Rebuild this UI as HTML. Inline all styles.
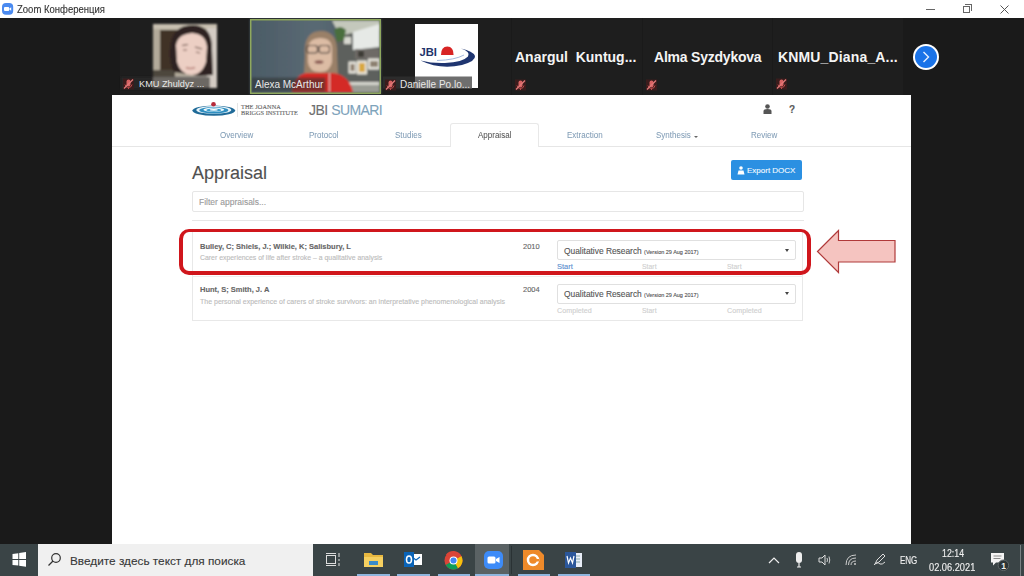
<!DOCTYPE html>
<html><head><meta charset="utf-8">
<style>
*{margin:0;padding:0;box-sizing:border-box}
html,body{width:1024px;height:576px;overflow:hidden;background:#1a1a1a;font-family:"Liberation Sans",sans-serif;position:relative}
.a{position:absolute}
.t{position:absolute;white-space:nowrap;line-height:1;-webkit-text-stroke:0.12px currentColor}
.nm{position:absolute;color:#f4f4f4;font-weight:bold;font-size:14px;white-space:nowrap;line-height:1}
.sn{position:absolute;color:#e8e8e8;font-size:10px;white-space:nowrap;line-height:1}
.nav{position:absolute;color:#819db6;font-size:8.8px;white-space:nowrap;line-height:1;top:131px;transform:scaleX(0.91);transform-origin:0 0;-webkit-text-stroke:0.05px currentColor}
.mic{position:absolute;width:11px;height:12px}
.ul{position:absolute;top:574px;height:2px;background:#8fb6de}
</style></head><body>
<!-- title bar -->
<div class="a" style="left:0;top:0;width:1024px;height:18px;background:#fff">
  <svg class="a" style="left:0;top:0" width="16" height="18" viewBox="0 0 16 18"><rect x="2" y="3.1" width="11.2" height="11.6" rx="4" fill="#4a8af0"/><rect x="4" y="7" width="5.2" height="4" rx="1" fill="#fff"/><path d="M9.4 8.5 L11.2 7.2 L11.2 10.8 L9.4 9.6 Z" fill="#fff"/></svg>
  <div class="t" style="left:16.5px;top:3.7px;font-size:11px;color:#333;transform:scaleX(0.865);transform-origin:0 0">Zoom Конференция</div>
  <div class="a" style="left:926px;top:9px;width:9px;height:1px;background:#666"></div>
  <div class="a" style="left:963px;top:6px;width:7px;height:7px;border:1px solid #666"></div>
  <div class="a" style="left:965px;top:4px;width:7px;height:7px;border-top:1px solid #666;border-right:1px solid #666"></div>
  <svg class="a" style="left:1000px;top:5px" width="9" height="9"><path d="M0.5 0.5L8.5 8.5M8.5 0.5L0.5 8.5" stroke="#555" stroke-width="1"/></svg>
</div>
<svg class="a" style="left:0;top:18px" width="1024" height="77" viewBox="0 18 1024 77">
<defs>
<filter id="soft" x="-5%" y="-5%" width="110%" height="110%"><feGaussianBlur stdDeviation="0.8"/></filter>
<linearGradient id="wallA" x1="0" y1="0" x2="1" y2="0"><stop offset="0" stop-color="#4b5b66"/><stop offset="0.5" stop-color="#5a6a74"/><stop offset="1" stop-color="#46545d"/></linearGradient>
<radialGradient id="faceK" cx="0.5" cy="0.45" r="0.6"><stop offset="0" stop-color="#f0c9b8"/><stop offset="1" stop-color="#c99a88"/></radialGradient>
<radialGradient id="faceA" cx="0.5" cy="0.45" r="0.6"><stop offset="0" stop-color="#e8c0a8"/><stop offset="1" stop-color="#b88a72"/></radialGradient>
</defs>
<rect x="0" y="18" width="1024" height="77" fill="#1a1a1a"/>
<rect x="120" y="18" width="130" height="77" fill="#1e1e1e"/>
<rect x="381" y="18" width="130" height="77" fill="#1e1e1e"/>
<rect x="512" y="18" width="130" height="77" fill="#1e1e1e"/>
<rect x="643" y="18" width="129" height="77" fill="#1e1e1e"/>
<rect x="773" y="18" width="130" height="77" fill="#1e1e1e"/>
<!-- KMU photo -->
<g filter="url(#soft)">
<rect x="153" y="24" width="64" height="64" fill="#b2aa9a"/>
<rect x="153" y="24" width="64" height="5" fill="#c8c0b0"/>
<rect x="160" y="30" width="18" height="42" fill="#3f3026"/>
<rect x="153" y="70" width="22" height="18" fill="#4e463e"/>
<rect x="207" y="28" width="10" height="60" fill="#d4ccc4"/>
<path d="M170 50 Q171 25 193 25 Q213 26 212 50 L213 75 L200 76 L174 72 Q169 62 170 50 Z" fill="#2e2420"/>
<path d="M176 45 Q178 34 192 33 Q206 34 207 47 L206 62 Q202 75 191 75 Q180 74 177 62 Z" fill="#eccfc4"/>
<path d="M182 45.5 L188 44.5 M195 47 L202 49" stroke="#5e443c" stroke-width="1.2"/>
<path d="M183 50 L187 50 M196 52 L200 53" stroke="#7a5a52" stroke-width="1.2"/>
<path d="M186 67.5 Q190 69.5 195 67.5" stroke="#b88078" stroke-width="1.6" fill="none"/>
<path d="M175 76 L207 76 L207 88 L172 88 Z" fill="#9a948e"/>
<rect x="121" y="77" width="32" height="12" fill="#262626"/>
<rect x="153" y="77" width="57" height="11" fill="#6c6864"/>
</g>
<!-- Alexa -->
<g filter="url(#soft)">
<rect x="250" y="19" width="131" height="75" fill="url(#wallA)"/>
<path d="M332 20.5 L379.5 20.5 L379.5 92.5 L334 92.5 L334 40 L340 34 Z" fill="#5d615d"/>
<path d="M332 20.5 L379.5 20.5 L379.5 30 L352 33 L340 36 Z" fill="#c4c8bc"/>
<path d="M353 32 L379.5 24 L379.5 47 L353 50 Z" fill="#e6e9e6"/>
<rect x="355" y="49" width="24.5" height="10" fill="#6e6a66"/>
<rect x="358" y="51" width="6" height="6" fill="#3e3a36"/>
<rect x="344" y="37" width="7" height="7" fill="#d8d8d0"/>
<rect x="348.5" y="61.5" width="8" height="12" fill="#e6e4dc"/>
<rect x="350.5" y="64" width="4" height="7" fill="#8a7a6a"/>
<rect x="357" y="60.5" width="10" height="14" fill="#e8e4d8"/>
<rect x="359" y="63" width="6" height="9" fill="#d8a840"/>
<rect x="368" y="58.5" width="11.5" height="11" fill="#e8e6de"/>
<rect x="370" y="61" width="8" height="6" fill="#8c8070"/>
<rect x="344" y="82" width="35.5" height="3" fill="#d4d4cc"/>
<rect x="334" y="85" width="45.5" height="7.5" fill="#9a9c94"/>
<path d="M334 30 Q340 24 346 30 L344 40 L337 42 Z" fill="#4a6e3e"/>
<path d="M305 56 Q303 31 321 31 Q338 31 337 54 L338 75 L304 75 Z" fill="#9a8068"/>
<path d="M308 48 Q309 38 320 38 Q332 38 332 49 L332 62 Q330 72 320 72 Q309 72 308 62 Z" fill="#dcbca4"/>
<rect x="307" y="45.5" width="10.5" height="7.5" rx="2.5" fill="none" stroke="#3a3230" stroke-width="1.1"/>
<rect x="319" y="45.5" width="10.5" height="7.5" rx="2.5" fill="none" stroke="#3a3230" stroke-width="1.1"/>
<ellipse cx="319" cy="62" rx="4.5" ry="1.8" fill="#8a5a52"/>
<path d="M292 92.5 Q293 76 306 73 L334 73 Q350 76 353 92.5 Z" fill="#d42c26"/>
<path d="M329.5 73 L329.5 92" stroke="#e8dcd8" stroke-width="0.8"/>
<rect x="251.5" y="77.5" width="74" height="14" fill="#2e3030" opacity="0.55"/>
</g>
<rect x="250.75" y="19.75" width="129.5" height="73.5" fill="none" stroke="#8fa85e" stroke-width="1.5"/>
<!-- Danielle -->
<g>
<rect x="415" y="24" width="63" height="64" fill="#ffffff"/>
<text x="419.5" y="55.5" font-family="Liberation Sans" font-weight="bold" font-size="11" fill="#22356a" textLength="17.5" lengthAdjust="spacingAndGlyphs">JBI</text>
<path d="M441 55 Q441 46.5 447.3 46.5 Q453.6 46.5 453.6 55 Z" fill="#d82424"/>
<path d="M420.5 60.5 Q440 70 462 65 Q476 61 475 56 Q473 51 461 48.5 Q471 52 468 56.5 Q463 62 445 63 Q432 63.5 420.5 60.5 Z" fill="#1f3570"/>
<path d="M437 60.5 Q455 60 464 55" fill="none" stroke="#9ab0d8" stroke-width="0.9"/>
<rect x="383" y="76.5" width="32" height="12" fill="#2c2c2c"/>
<rect x="415" y="76.5" width="57" height="12" fill="#6e6e6e"/>
</g>
<!-- next arrow -->
<circle cx="926" cy="57" r="13" fill="#ffffff"/>
<circle cx="926" cy="57" r="11" fill="#1a73e8"/>
<path d="M923.5 52 L928.5 57 L923.5 62" fill="none" stroke="#e8f0ff" stroke-width="1.4"/>
</svg>
<div class="sn" style="left:139px;top:80px;font-size:9.2px">KMU Zhuldyz ...</div>
<div class="sn" style="left:255px;top:80px">Alexa McArthur</div>
<div class="sn" style="left:400px;top:80px">Danielle Po.lo...</div>
<div class="nm" style="left:515px;top:50px">Anargul&nbsp; Kuntug...</div>
<div class="nm" style="left:654px;top:50px;letter-spacing:-0.22px">Alma Syzdykova</div>
<div class="nm" style="left:778px;top:50px;letter-spacing:0.15px">KNMU_Diana_A...</div>
<svg class="mic" style="left:123px;top:78px" viewBox="0 0 11 12"><rect x="0" y="0.5" width="11" height="11" fill="#3a1c1c"/><rect x="3.5" y="1.5" width="4" height="7" rx="2" fill="#d86262"/><path d="M2 6.5 Q2.5 9.5 5.5 9.5 Q8.5 9.5 9 6.5 M5.5 9.5 V11" fill="none" stroke="#c85050" stroke-width="0.9"/><path d="M1 10.5 L10 1.5" stroke="#e07a7a" stroke-width="1.2"/></svg>
<svg class="mic" style="left:385px;top:79px" viewBox="0 0 11 12"><rect x="0" y="0.5" width="11" height="11" fill="#3a1c1c"/><rect x="3.5" y="1.5" width="4" height="7" rx="2" fill="#d86262"/><path d="M2 6.5 Q2.5 9.5 5.5 9.5 Q8.5 9.5 9 6.5 M5.5 9.5 V11" fill="none" stroke="#c85050" stroke-width="0.9"/><path d="M1 10.5 L10 1.5" stroke="#e07a7a" stroke-width="1.2"/></svg>
<svg class="mic" style="left:515px;top:79px" viewBox="0 0 11 12"><rect x="0" y="0.5" width="11" height="11" fill="#3a1c1c"/><rect x="3.5" y="1.5" width="4" height="7" rx="2" fill="#d86262"/><path d="M2 6.5 Q2.5 9.5 5.5 9.5 Q8.5 9.5 9 6.5 M5.5 9.5 V11" fill="none" stroke="#c85050" stroke-width="0.9"/><path d="M1 10.5 L10 1.5" stroke="#e07a7a" stroke-width="1.2"/></svg>
<svg class="mic" style="left:646px;top:79px" viewBox="0 0 11 12"><rect x="0" y="0.5" width="11" height="11" fill="#3a1c1c"/><rect x="3.5" y="1.5" width="4" height="7" rx="2" fill="#d86262"/><path d="M2 6.5 Q2.5 9.5 5.5 9.5 Q8.5 9.5 9 6.5 M5.5 9.5 V11" fill="none" stroke="#c85050" stroke-width="0.9"/><path d="M1 10.5 L10 1.5" stroke="#e07a7a" stroke-width="1.2"/></svg>
<svg class="mic" style="left:776px;top:78px" viewBox="0 0 11 12"><rect x="0" y="0.5" width="11" height="11" fill="#3a1c1c"/><rect x="3.5" y="1.5" width="4" height="7" rx="2" fill="#d86262"/><path d="M2 6.5 Q2.5 9.5 5.5 9.5 Q8.5 9.5 9 6.5 M5.5 9.5 V11" fill="none" stroke="#c85050" stroke-width="0.9"/><path d="M1 10.5 L10 1.5" stroke="#e07a7a" stroke-width="1.2"/></svg>
<div class="a" style="left:112px;top:95px;width:799px;height:449px;background:#fff"></div>
<!-- logo -->
<svg class="a" style="left:190px;top:100px" width="50" height="20" viewBox="0 0 50 20">
  <ellipse cx="23.8" cy="10.6" rx="21.4" ry="5.2" fill="#1f6a98"/>
  <ellipse cx="23.8" cy="9.9" rx="17.5" ry="3.9" fill="#e8f4fa"/>
  <ellipse cx="23.8" cy="10.3" rx="14.5" ry="3.2" fill="#2f8ec0"/>
  <ellipse cx="23.8" cy="9.8" rx="10.5" ry="2.2" fill="#eef8fc"/>
  <ellipse cx="23.8" cy="10.1" rx="7.5" ry="1.7" fill="#3a9ccc"/>
  <ellipse cx="23.8" cy="9.8" rx="4" ry="0.9" fill="#fff"/>
  <circle cx="23.5" cy="4.3" r="2.3" fill="#b52a3a"/>
</svg>
<div class="a" style="left:237px;top:103px;width:1px;height:14px;background:#e6e6e6"></div>
<div class="t" style="left:241px;top:104px;font-family:'Liberation Serif',serif;font-size:6.3px;color:#666;letter-spacing:0.1px">THE JOANNA</div>
<div class="t" style="left:241px;top:110px;font-family:'Liberation Serif',serif;font-size:6.3px;color:#666;letter-spacing:0px">BRIGGS INSTITUTE</div>
<div class="t" style="left:309px;top:103px;font-size:14px;color:#6f6f6f;letter-spacing:-0.6px;word-spacing:0.5px">JBI <span style="color:#7ea3bb">SUMARI</span></div>
<!-- user/help icons -->
<svg class="a" style="left:763px;top:104px" width="9" height="10" viewBox="0 0 9 10"><circle cx="4.5" cy="2.5" r="2.3" fill="#555"/><path d="M0.5 10 L0.5 7 Q0.5 5 4.5 5 Q8.5 5 8.5 7 L8.5 10 Z" fill="#555"/></svg>
<div class="t" style="left:789px;top:105px;font-size:10px;font-weight:bold;color:#5a5a5a">?</div>
<!-- nav -->
<div class="a" style="left:112px;top:146px;width:799px;height:1px;background:#e6e6e6"></div>
<div class="a" style="left:450px;top:123px;width:89px;height:24px;background:#fff;border:1px solid #e8e8e8;border-bottom:none;border-radius:3px 3px 0 0"></div>
<div class="nav" style="left:220px">Overview</div>
<div class="nav" style="left:309px">Protocol</div>
<div class="nav" style="left:395px">Studies</div>
<div class="nav" style="left:478px;color:#555">Appraisal</div>
<div class="nav" style="left:567px">Extraction</div>
<div class="nav" style="left:656px">Synthesis</div><div class="a" style="left:693.5px;top:135.5px;width:0;height:0;border-left:2.5px solid transparent;border-right:2.5px solid transparent;border-top:2.8px solid #666"></div>
<div class="nav" style="left:751px">Review</div>
<!-- heading -->
<div class="t" style="left:192px;top:164px;font-size:18px;color:#505050">Appraisal</div>
<div class="a" style="left:731px;top:160px;width:71px;height:20px;background:#2b90e2;border-radius:2px"></div>
<svg class="a" style="left:737px;top:166px" width="8" height="9" viewBox="0 0 8 9"><circle cx="4" cy="2" r="1.8" fill="#fff"/><path d="M0.5 8.5 L1.5 4.5 L6.5 4.5 L7.5 8.5Z" fill="#fff"/></svg>
<div class="t" style="left:747px;top:167px;font-size:8px;color:#f4faff">Export DOCX</div>
<!-- filter -->
<div class="a" style="left:192px;top:191px;width:612px;height:21px;border:1px solid #e6e6e6;border-radius:2px"></div>
<div class="t" style="left:199px;top:198px;font-size:8.5px;color:#9a9a9a">Filter appraisals...</div>
<div class="a" style="left:192px;top:220px;width:612px;height:1px;background:#e6e6e6"></div>
<!-- list -->
<div class="a" style="left:192px;top:232px;width:611px;height:89px;border:1px solid #e8e8e8;border-top:none"></div>
<div class="a" style="left:192px;top:276px;width:611px;height:1px;background:#eee"></div>
<div class="t" style="left:200px;top:243px;font-size:7.5px;font-weight:bold;color:#666">Bulley, C; Shiels, J.; Wilkie, K; Salisbury, L</div>
<div class="t" style="left:200px;top:255px;font-size:6.9px;color:#bcbcbc">Carer experiences of life after stroke – a qualitative analysis</div>
<div class="t" style="left:523px;top:243px;font-size:7.5px;color:#666">2010</div>
<div class="a" style="left:557px;top:240px;width:239px;height:20px;border:1px solid #e0e0e0;border-radius:2px"></div>
<div class="t" style="left:564px;top:247px;font-size:8.4px;color:#555">Qualitative Research <span style="font-size:5.5px">(Version 29 Aug 2017)</span></div>
<div class="a" style="left:785px;top:249px;width:0;height:0;border-left:2.5px solid transparent;border-right:2.5px solid transparent;border-top:3px solid #444"></div>
<div class="t" style="left:557px;top:263px;font-size:7.5px;color:#5b8fcf">Start</div>
<div class="t" style="left:642px;top:264px;font-size:6.9px;color:#cfcfcf">Start</div>
<div class="t" style="left:727px;top:264px;font-size:6.9px;color:#cfcfcf">Start</div>

<div class="t" style="left:200px;top:286px;font-size:7.5px;font-weight:bold;color:#666">Hunt, S; Smith, J. A</div>
<div class="t" style="left:200px;top:298px;font-size:7px;color:#bcbcbc">The personal experience of carers of stroke survivors: an interpretative phenomenological analysis</div>
<div class="t" style="left:523px;top:286px;font-size:7.5px;color:#666">2004</div>
<div class="a" style="left:557px;top:284px;width:239px;height:20px;border:1px solid #e0e0e0;border-radius:2px"></div>
<div class="t" style="left:564px;top:290px;font-size:8.4px;color:#555">Qualitative Research <span style="font-size:5.5px">(Version 29 Aug 2017)</span></div>
<div class="a" style="left:785px;top:292px;width:0;height:0;border-left:2.5px solid transparent;border-right:2.5px solid transparent;border-top:3px solid #444"></div>
<div class="t" style="left:557px;top:307px;font-size:7.2px;color:#cfcfcf">Completed</div>
<div class="t" style="left:642px;top:308px;font-size:6.9px;color:#cfcfcf">Start</div>
<div class="t" style="left:727px;top:307px;font-size:7.2px;color:#cfcfcf">Completed</div>

<!-- red highlight -->
<div class="a" style="left:179px;top:228.8px;width:632px;height:46.5px;border:solid #d0161c;border-width:3.6px 4px 4.2px 4px;border-radius:10px"></div>
<svg class="a" style="left:815px;top:228px" width="82" height="47" viewBox="815 228 82 47">
  <path d="M817.5 251.5 L838.5 230.5 L838.5 240.5 L895 240.5 L895 262 L838.5 262 L838.5 272.5 Z" fill="#f5c4c0" stroke="#b03a3a" stroke-width="1.2"/>
</svg>
<div class="a" style="left:0;top:544px;width:1024px;height:32px;background:#3a4446"></div>
<svg class="a" style="left:12px;top:552px" width="15" height="15" viewBox="0 0 15 15"><path d="M0.5 2 L6.3 1.2 L6.3 7 L0.5 7 Z M7.2 1 L14 0 L14 7 L7.2 7 Z M0.5 7.9 L6.3 7.9 L6.3 13.6 L0.5 12.9 Z M7.2 7.9 L14 7.9 L14 14.7 L7.2 13.8 Z" fill="#fff"/></svg>
<div class="a" style="left:38px;top:544px;width:275px;height:32px;background:#f0f0f0"></div>
<svg class="a" style="left:47px;top:552px" width="15" height="15" viewBox="0 0 15 15"><circle cx="9" cy="6" r="4.3" fill="none" stroke="#333" stroke-width="1.2"/><path d="M6 9 L1.5 13.5" stroke="#333" stroke-width="1.3"/></svg>
<div class="t" style="left:70px;top:556px;font-size:11.8px;color:#383838">Введите здесь текст для поиска</div>
<!-- task view -->
<svg class="a" style="left:325px;top:552px" width="16" height="15" viewBox="0 0 16 15"><rect x="1.5" y="3.5" width="9" height="8" fill="none" stroke="#ddd" stroke-width="1"/><path d="M1 1.5 H11 M1 13.5 H11 M14 1 V5 M14 7 V9 M14 11 V14" stroke="#ddd" stroke-width="1"/></svg>
<!-- explorer -->
<svg class="a" style="left:364px;top:551px" width="20" height="17" viewBox="0 0 20 17"><path d="M0 2 H7 L9 4 H19 V16 H0 Z" fill="#e8b840"/><rect x="0" y="6" width="19" height="10" fill="#f6d060"/><rect x="5" y="10" width="9" height="4" fill="#3a8ac8"/></svg>
<!-- outlook -->
<svg class="a" style="left:404px;top:551px" width="19" height="17" viewBox="0 0 19 17"><rect x="6" y="3" width="12" height="11" fill="#fff"/><path d="M8 6 L12 9 L16 6" stroke="#0a64b8" fill="none" stroke-width="1.2"/><rect x="0" y="1" width="10" height="15" fill="#0a64b8"/><ellipse cx="5" cy="8.5" rx="2.5" ry="3.5" fill="none" stroke="#fff" stroke-width="1.5"/></svg>
<!-- chrome -->
<svg class="a" style="left:444px;top:551px" width="19" height="19" viewBox="0 0 20 20"><circle cx="10" cy="10" r="9.5" fill="#db4437"/><path d="M10 10 L1.8 14.8 A9.5 9.5 0 0 0 14.8 18.2 Z" fill="#0f9d58"/><path d="M10 10 L14.8 18.2 A9.5 9.5 0 0 0 18.2 5.2 Z" fill="#f4c20d"/><path d="M10 10 L18.2 5.2 A9.5 9.5 0 0 0 2 4 Z" fill="#db4437"/><circle cx="10" cy="10" r="4.2" fill="#fff"/><circle cx="10" cy="10" r="3.2" fill="#4285f4"/></svg>
<!-- zoom -->
<div class="a" style="left:475px;top:544px;width:34px;height:32px;background:#5a6264"></div>
<svg class="a" style="left:484px;top:551px" width="19" height="18" viewBox="0 0 19 18"><rect x="0" y="0" width="19" height="18" rx="5" fill="#3d8bf8"/><rect x="3.5" y="5.5" width="8" height="7" rx="1.5" fill="#fff"/><path d="M12 8 L15.5 6 L15.5 12 L12 10 Z" fill="#fff"/></svg>
<div class="a" style="left:511px;top:546px;width:1px;height:28px;background:#2a3234"></div>
<!-- foxit -->
<svg class="a" style="left:523px;top:550px" width="21" height="20" viewBox="0 0 21 20"><path d="M0 0 H16 L21 5 V20 H0 Z" fill="#ee8a2a"/><circle cx="10" cy="10" r="5" fill="none" stroke="#fff" stroke-width="2.5"/><rect x="10" y="9" width="6" height="2.5" fill="#ee8a2a"/></svg>
<!-- word -->
<svg class="a" style="left:565px;top:551px" width="18" height="18" viewBox="0 0 18 18"><rect x="7" y="2" width="10" height="14" fill="#e8eef8"/><path d="M9 5H15M9 8H15M9 11H15" stroke="#8aa" stroke-width="1"/><rect x="0" y="1" width="11" height="16" fill="#2b579a"/><path d="M2 5 L3.5 12 L5.5 7 L7.5 12 L9 5" fill="none" stroke="#fff" stroke-width="1.2"/></svg>
<div class="ul" style="left:357px;width:33px"></div>
<div class="ul" style="left:397px;width:33px"></div>
<div class="ul" style="left:438px;width:32px"></div>
<div class="ul" style="left:475px;width:34px"></div>
<div class="ul" style="left:518px;width:32px"></div>
<div class="ul" style="left:558px;width:32px"></div>
<div class="a" style="left:1020px;top:545px;width:1px;height:31px;background:#7a8284"></div>
<!-- tray -->
<svg class="a" style="left:768px;top:557px" width="12" height="7" viewBox="0 0 12 7"><path d="M1 6 L6 1 L11 6" fill="none" stroke="#eee" stroke-width="1.2"/></svg>
<svg class="a" style="left:795px;top:552px" width="8" height="16" viewBox="0 0 8 16"><rect x="1" y="0" width="6" height="11" rx="3" fill="#eee"/><path d="M4 11 V15 M2 15 H6" stroke="#eee" stroke-width="1.2"/></svg>
<svg class="a" style="left:818px;top:554px" width="13" height="12" viewBox="0 0 13 12"><path d="M1 4 H4 L7 1 V11 L4 8 H1 Z" fill="none" stroke="#ddd" stroke-width="1"/><path d="M9 4 Q10 6 9 8 M11 2.5 Q12.5 6 11 9.5" fill="none" stroke="#ddd" stroke-width="0.9"/></svg>
<svg class="a" style="left:845px;top:553px" width="12" height="13" viewBox="0 0 12 13"><path d="M1 12 Q1 2 11 2 M3.5 12 Q3.5 5 11 5 M6 12 Q6 8 11 8" fill="none" stroke="#ccc" stroke-width="1"/><circle cx="10" cy="11" r="1" fill="#ccc"/></svg>
<svg class="a" style="left:873px;top:552px" width="14" height="14" viewBox="0 0 14 14"><path d="M2 12 L4 8 L10 2 L12 4 L6 10 Z M1 13 Q4 9 7 12 Q9 13 12 10" fill="none" stroke="#ddd" stroke-width="1"/></svg>
<div class="t" style="left:900px;top:556px;font-size:10px;color:#f0f0f0;transform:scaleX(0.8);transform-origin:0 0">ENG</div>
<div class="t" style="left:941.5px;top:549px;font-size:10px;color:#f0f0f0;transform:scaleX(0.88);transform-origin:0 0">12:14</div>
<div class="t" style="left:929px;top:563px;font-size:10px;color:#f0f0f0;transform:scaleX(0.925);transform-origin:0 0">02.06.2021</div>
<svg class="a" style="left:988px;top:550px" width="24" height="24" viewBox="0 0 24 24"><path d="M3 3 H16 V12.5 H8 L5 15.5 V12.5 H3 Z" fill="#f4f4f4"/><path d="M5.5 6 H13.5 M5.5 8.5 H12.5" stroke="#8a8a8a" stroke-width="1"/><circle cx="15.4" cy="15.3" r="5.3" fill="#2c3436" stroke="#5e6668" stroke-width="1"/><text x="15.6" y="18.6" font-size="8.5" font-weight="bold" font-family="Liberation Sans" fill="#f0f0f0" text-anchor="middle">1</text></svg>
</body></html>
